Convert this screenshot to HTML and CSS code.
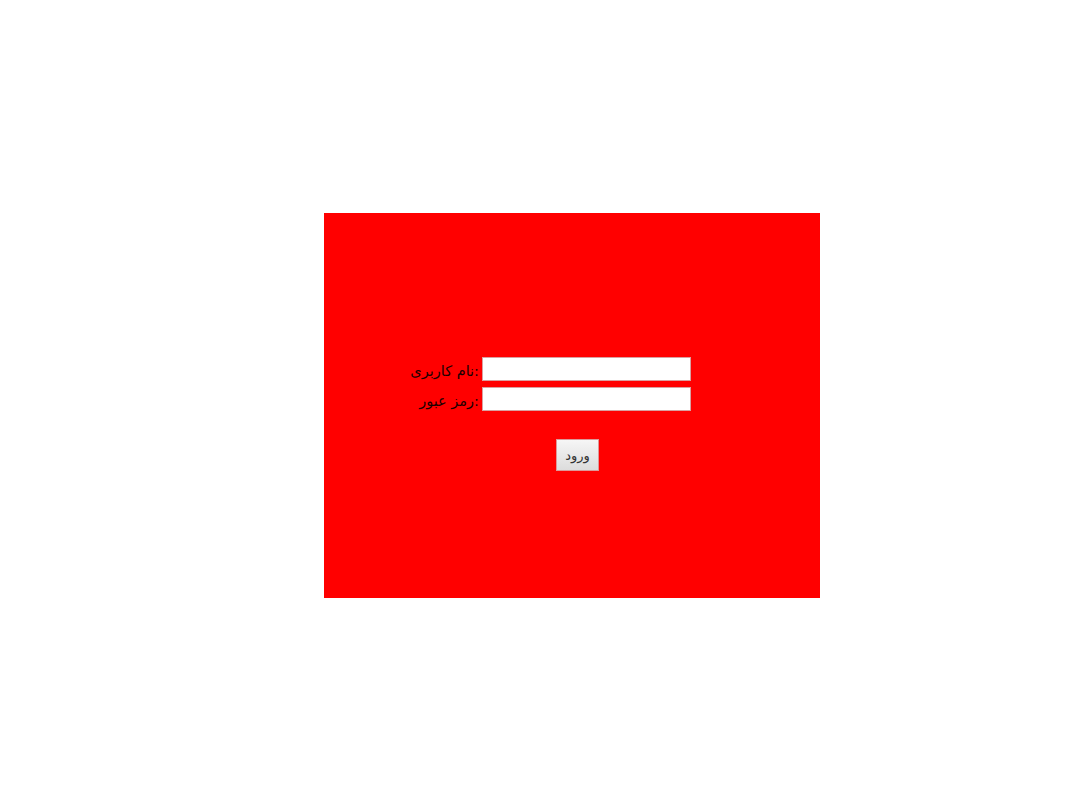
FILE: index.html
```html
<!DOCTYPE html>
<html>
<head>
<meta charset="utf-8">
<link rel="stylesheet" href="styles.css">
</head>
<body>
<div class="box">
  <form class="login">
    <div class="row">
      <label class="lbl">نام کاربری:</label>
      <input class="field" type="text">
    </div>
    <div class="row">
      <label class="lbl">رمز عبور:</label>
      <input class="field" type="password">
    </div>
    <div class="actions">
      <button class="btn" type="button">ورود</button>
    </div>
  </form>
</div>
</body>
</html>
```
FILE: styles.css
```css
html, body {
  margin: 0;
  padding: 0;
  background: #fff;
}
body {
  font-family: "DejaVu Sans", sans-serif;
  font-size: 14.5px;
  color: #1a0000;
}
.box {
  margin: 213px 0 0 324px;
  width: 496px;
  height: 385px;
  background: #ff0000;
  box-sizing: border-box;
  padding: 144px 0 0 0;
}
.login {
  display: flex;
  flex-direction: column;
}
.row {
  display: flex;
  align-items: center;
  height: 24px;
  margin-bottom: 6px;
}
.lbl {
  width: 155px;
  text-align: right;
  padding-top: 3px;
  box-sizing: border-box;
}
.field {
  width: 209px;
  height: 24px;
  box-sizing: border-box;
  margin: 0 0 0 3px;
  border: 1px solid #d9a0a0;
  background: #fff;
  padding: 0 2px;
}
.actions {
  display: flex;
  padding-left: 232px;
  margin-top: 22px;
}
.btn {
  width: 43px;
  height: 32px;
  font-family: "DejaVu Sans", sans-serif;
  font-size: 13px;
  color: #333;
  border: 1px solid #d99;
  background: linear-gradient(#f6f6f6, #dcdcdc);
  padding: 0;
}
```
